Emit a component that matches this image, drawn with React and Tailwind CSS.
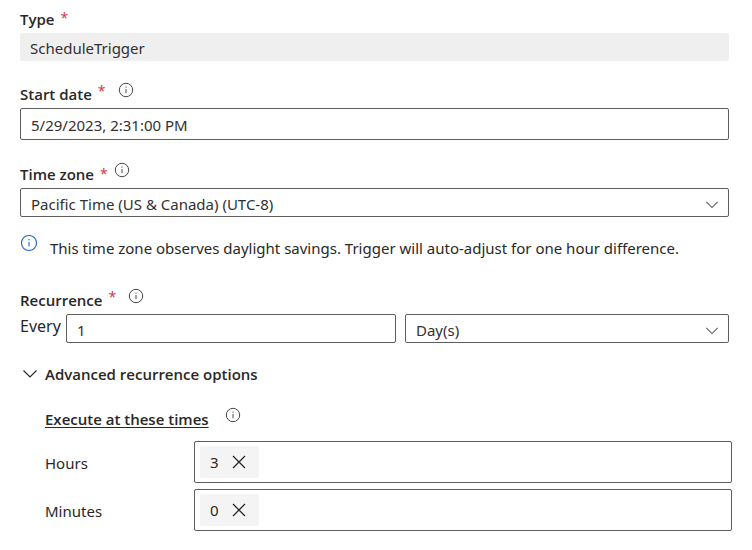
import { useState } from "react";

function InfoIcon({ className = "size-4 text-[#494847]" }) {
  return (
    <svg viewBox="0 0 16 16" fill="none" stroke="currentColor" aria-hidden="true" className={`shrink-0 ${className}`}>
      <circle cx="8" cy="8" r="6.7" strokeWidth="1" />
      <path d="M8 7v4.2" strokeWidth="1" />
      <circle cx="8" cy="5.1" r="0.65" fill="currentColor" stroke="none" />
    </svg>
  );
}

function Chevron({ className = "", strokeWidth = 1.2 }) {
  return (
    <svg viewBox="0 0 16 16" fill="none" stroke="currentColor" aria-hidden="true" className={className}>
      <path d="M1.5 4.5l6.5 6.5 6.5-6.5" strokeWidth={strokeWidth} />
    </svg>
  );
}

function InfoButton({ label }) {
  return (
    <button type="button" aria-label={label} className="mb-2">
      <InfoIcon />
    </button>
  );
}

function FieldLabel({ htmlFor, children, info, starClass = "mb-1.5", gap = "gap-3" }) {
  return (
    <div className={`flex h-7 items-center ${gap}`}>
      <label htmlFor={htmlFor} className="flex items-center gap-1.5 font-['Open_Sans','Noto_Sans',sans-serif] font-semibold">
        {children}
        <span className={`text-sm leading-5 font-normal text-[#d13438] ${starClass}`}>*</span>
      </label>
      {info && <InfoButton label={info} />}
    </div>
  );
}

const box = "w-full rounded-xs border border-[#605e5c] bg-white px-2.5 text-[#323130]";

function Select({ id, options, label }) {
  return (
    <div className="relative min-w-0 flex-1">
      <select id={id} aria-label={label} className={`${box} block h-[29px] appearance-none pt-0.5`}>
        {options.map((o) => (
          <option key={o}>{o}</option>
        ))}
      </select>
      <Chevron className="pointer-events-none absolute top-2.5 right-2.5 size-3.5 text-[#605e5c]" />
    </div>
  );
}

function TagField({ id, label, initial }) {
  const [tags, setTags] = useState(initial);
  return (
    <div className="flex items-center">
      <label htmlFor={id} className="w-[149px] shrink-0 pt-0.5">
        {label}
      </label>
      <div className="flex h-[42px] min-w-0 flex-1 items-center gap-2 rounded-xs border border-[#605e5c] px-[5px]">
        {tags.map((t) => (
          <span key={t} className="flex h-8 w-[59px] items-center justify-between rounded-xs bg-[#f4f4f4] pr-3 pl-2.5">
            <span>{t}</span>
            <button type="button" aria-label={`Remove ${t}`} onClick={() => setTags(tags.filter((x) => x !== t))}>
              <svg viewBox="0 0 16 16" fill="none" stroke="currentColor" strokeWidth="1.3" className="size-4">
                <path d="M2 2l12 12M14 2L2 14" />
              </svg>
            </button>
          </span>
        ))}
        <input id={id} className="h-8 min-w-0 flex-1 outline-none" />
      </div>
    </div>
  );
}

export default function App() {
  return (
    <form className="bg-white pt-[5px] pr-5 pl-5 font-['Noto_Sans','Open_Sans',sans-serif] text-[15px] leading-5 text-[#292827]">
      <div className="pr-[3px]">
        <FieldLabel htmlFor="type" starClass="mb-0.5">Type</FieldLabel>
        <input
          id="type"
          readOnly
          defaultValue="ScheduleTrigger"
          className="block h-7 w-full rounded-xs bg-[#efefef] px-2.5 pt-0.5 text-[#323130]"
        />

        <div className="mt-[19px]">
          <FieldLabel htmlFor="start" info="About start date">Start date</FieldLabel>
          <input id="start" defaultValue="5/29/2023, 2:31:00 PM" className={`${box} block h-8 pt-0.5`} />
        </div>

        <div className="mt-5">
          <FieldLabel htmlFor="zone" info="About time zone" starClass="mb-0" gap="gap-1.5">Time zone</FieldLabel>
          <Select id="zone" options={["Pacific Time (US & Canada) (UTC-8)"]} />
        </div>

        <div className="mt-[17px] flex items-start gap-3">
          <InfoIcon className="size-[18px] text-[#2266bb]" />
          <p className="pt-1">
            This time zone observes daylight savings. Trigger will auto-adjust for one hour difference.
          </p>
        </div>

        <div className="mt-7">
          <FieldLabel htmlFor="every" info="About recurrence">Recurrence</FieldLabel>
          <div className="flex">
            <label htmlFor="every" className="w-[46px] shrink-0 text-base">
              Every
            </label>
            <div className="grid min-w-0 flex-1 grid-cols-[330fr_324fr] gap-[9px]">
              <input id="every" defaultValue="1" className={`${box} block h-[29px] pt-0.5`} />
              <Select id="unit" label="Recurrence unit" options={["Day(s)"]} />
            </div>
          </div>
        </div>
      </div>

      <button
        type="button"
        aria-expanded="true"
        className="mt-[21px] flex items-center gap-[7px] pl-0.5 font-['Open_Sans','Noto_Sans',sans-serif] font-semibold"
      >
        <Chevron className="size-4" />
        Advanced recurrence options
      </button>

      <div className="mt-[21px] pl-[25px]">
        <div className="flex h-7 items-center gap-4">
          <h2 className="font-['Open_Sans','Noto_Sans',sans-serif] font-semibold underline underline-offset-2">
            Execute at these times
          </h2>
          <InfoButton label="About execution times" />
        </div>
        <div className="mt-2 flex flex-col gap-1.5">
          <TagField id="hours" label="Hours" initial={[3]} />
          <TagField id="minutes" label="Minutes" initial={[0]} />
        </div>
      </div>
    </form>
  );
}
